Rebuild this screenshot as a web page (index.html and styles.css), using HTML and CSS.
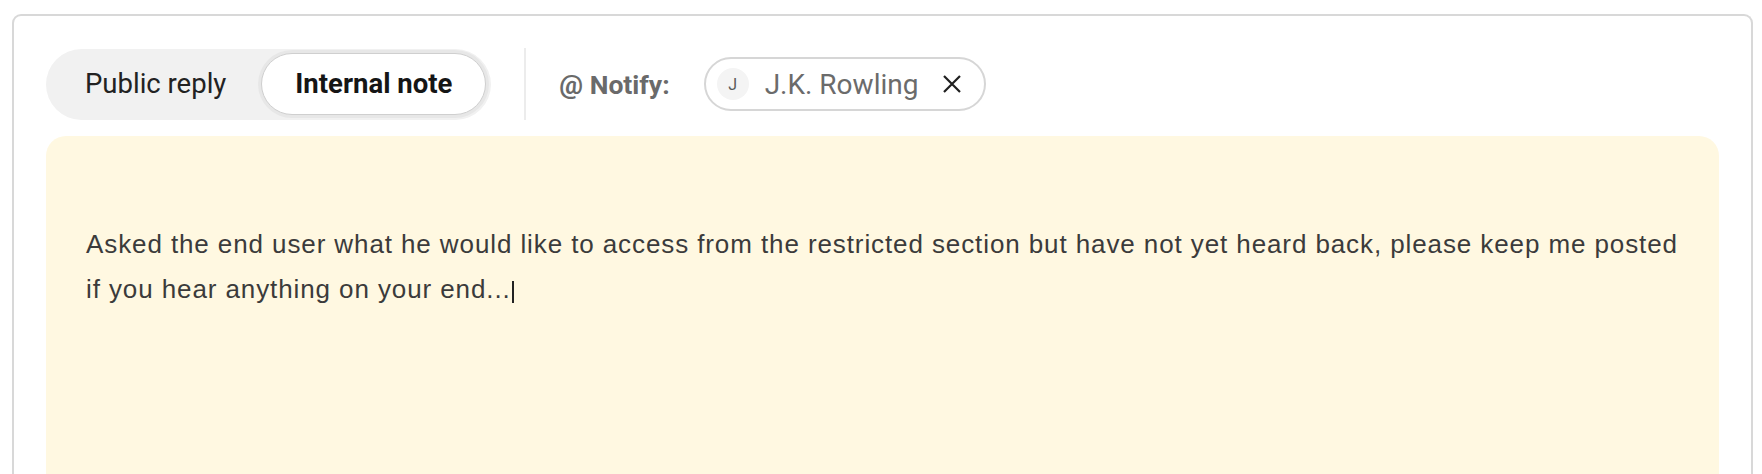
FILE: index.html
```html
<!DOCTYPE html>
<html>
<head>
<meta charset="utf-8">
<link rel="stylesheet" href="styles.css">
</head>
<body>
<div class="card">
  <div class="header">
    <div class="toggle">
      <div class="seg">Public reply</div>
      <div class="seg active">Internal note</div>
    </div>
    <div class="divider"></div>
    <div class="notify">@ Notify:</div>
    <div class="chip">
      <span class="avatar">J</span>
      <span class="chip-name">J.K. Rowling</span>
      <svg class="chip-x" width="20" height="20" viewBox="0 0 20 20"><path d="M2 2 L18 18 M18 2 L2 18" stroke="#1f1f1f" stroke-width="2.2" fill="none"/></svg>
    </div>
  </div>
  <div class="note">
    <p class="note-text">Asked the end user what he would like to access from the restricted section but have not yet heard back, please keep me posted if you hear anything on your end...<span class="caret"></span></p>
  </div>
</div>
</body>
</html>
```
FILE: styles.css
```css
html, body {
  margin: 0;
  padding: 0;
  background: #ffffff;
}
body {
  padding: 14px 9px 0 12px;
  height: 474px;
  box-sizing: border-box;
  overflow: hidden;
}
.card {
  border: 2px solid #d8d8d8;
  border-bottom: none;
  border-radius: 9px 9px 0 0;
  padding: 32px 32px 0 32px;
  height: 460px;
  box-sizing: border-box;
  font-family: Roboto, "Liberation Sans", sans-serif;
}
.header {
  display: flex;
  align-items: center;
  height: 72px;
}
.toggle {
  display: flex;
  align-items: center;
  background: #f1f1f1;
  border-radius: 36px;
  height: 71px;
  box-sizing: border-box;
  padding: 0 5px 0 4px;
}
.seg {
  font-size: 27.5px;
  color: #222222;
  padding: 0 35px;
  height: 62px;
  line-height: 62px;
  box-sizing: border-box;
  border-radius: 31px;
}
.seg.active {
  background: #ffffff;
  border: 1px solid #cfcfcf;
  box-shadow: 0 0 0 3px #e7e7e7;
  font-weight: 700;
  color: #151515;
  padding: 0 33px;
  line-height: 60px;
}
.divider {
  width: 2px;
  align-self: stretch;
  background: #ececec;
  margin: 0 33px 0 33px;
}
.notify {
  font-size: 26.5px;
  font-weight: 700;
  color: #6a6a6a;
  margin-right: 34px;
}
.chip {
  display: flex;
  align-items: center;
  height: 54px;
  box-sizing: border-box;
  border: 2px solid #d6d6d6;
  border-radius: 27px;
  padding: 0 22px 0 11px;
}
.avatar {
  width: 32px;
  height: 32px;
  border-radius: 50%;
  background: #f4f4f4;
  color: #5a5a5a;
  font-size: 16px;
  display: flex;
  align-items: center;
  justify-content: center;
  margin-right: 16px;
}
.chip-name {
  font-size: 28px;
  color: #6b6b6b;
  margin-right: 24px;
}
.chip-x {
  display: block;
}
.note {
  margin-top: 16px;
  background: #fff8e1;
  border-radius: 20px 20px 0 0;
  height: 340px;
  padding: 0 30px 0 40px;
}
.note-text {
  margin: 0;
  padding-top: 86px;
  font-family: "Liberation Sans", Arial, sans-serif;
  font-size: 26px;
  letter-spacing: 0.9px;
  line-height: 45px;
  color: #3b3b3b;
}
.caret {
  display: inline-block;
  width: 2px;
  height: 22px;
  background: #222222;
  vertical-align: -5px;
  margin-left: 1px;
}
```
